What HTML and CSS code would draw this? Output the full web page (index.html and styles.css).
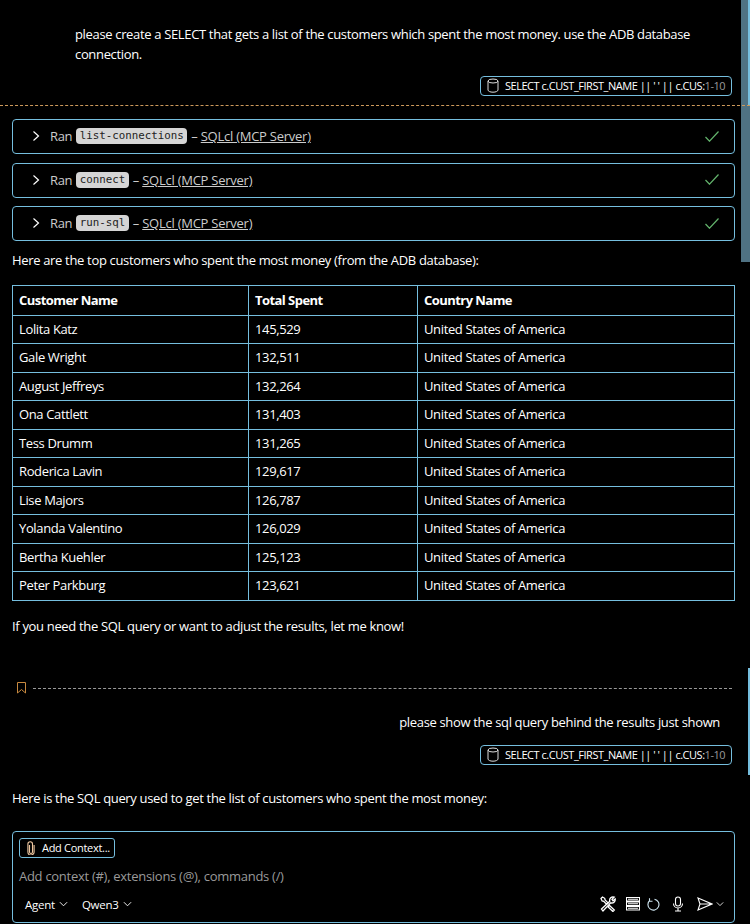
FILE: index.html
```html
<!DOCTYPE html>
<html lang="en">
<head>
<meta charset="utf-8">
<title>Chat</title>
<link rel="stylesheet" href="styles.css">
</head>
<body>
<div class="app">
  <main class="chat">
    <section class="request first">
      <p class="prompt">please create a SELECT that gets a list of the customers which spent the most money. use the ADB database connection.</p>
      <div class="ref-row">
        <span class="ref"><svg class="db" viewBox="0 0 12 15" width="12" height="15"><ellipse cx="6" cy="3" rx="5" ry="2"/><path d="M1 3v9c0 1.200 2.200 2.200 5 2.200s5-1 5-2.200V3"/></svg><span class="ref-text">SELECT c.CUST_FIRST_NAME || ' ' || c.CUS:<span class="ref-range">1-10</span></span></span>
      </div>
    </section>
    <div class="checkpoint"></div>
    <section class="tools">
      <div class="tool"><svg class="chev" viewBox="0 0 10 12" width="10" height="12"><path d="M2.500 1.500 7.500 6l-5 4.500"/></svg><span class="ran">Ran</span><code>list-connections</code><span class="dash">–</span><a>SQLcl (MCP Server)</a><svg class="check" viewBox="0 0 14 11" width="14" height="11"><path d="M.5 6 4.500 10.200 13.500.5"/></svg></div>
      <div class="tool"><svg class="chev" viewBox="0 0 10 12" width="10" height="12"><path d="M2.500 1.500 7.500 6l-5 4.500"/></svg><span class="ran">Ran</span><code>connect</code><span class="dash">–</span><a>SQLcl (MCP Server)</a><svg class="check" viewBox="0 0 14 11" width="14" height="11"><path d="M.5 6 4.500 10.200 13.500.5"/></svg></div>
      <div class="tool"><svg class="chev" viewBox="0 0 10 12" width="10" height="12"><path d="M2.500 1.500 7.500 6l-5 4.500"/></svg><span class="ran">Ran</span><code>run-sql</code><span class="dash">–</span><a>SQLcl (MCP Server)</a><svg class="check" viewBox="0 0 14 11" width="14" height="11"><path d="M.5 6 4.500 10.200 13.500.5"/></svg></div>
    </section>
    <p class="para intro">Here are the top customers who spent the most money (from the ADB database):</p>
    <table class="results">
      <thead><tr><th class="c1">Customer Name</th><th class="c2">Total Spent</th><th>Country Name</th></tr></thead>
      <tbody>
        <tr><td>Lolita Katz</td><td>145,529</td><td>United States of America</td></tr>
        <tr><td>Gale Wright</td><td>132,511</td><td>United States of America</td></tr>
        <tr><td>August Jeffreys</td><td>132,264</td><td>United States of America</td></tr>
        <tr><td>Ona Cattlett</td><td>131,403</td><td>United States of America</td></tr>
        <tr><td>Tess Drumm</td><td>131,265</td><td>United States of America</td></tr>
        <tr><td>Roderica Lavin</td><td>129,617</td><td>United States of America</td></tr>
        <tr><td>Lise Majors</td><td>126,787</td><td>United States of America</td></tr>
        <tr><td>Yolanda Valentino</td><td>126,029</td><td>United States of America</td></tr>
        <tr><td>Bertha Kuehler</td><td>125,123</td><td>United States of America</td></tr>
        <tr><td>Peter Parkburg</td><td>123,621</td><td>United States of America</td></tr>
      </tbody>
    </table>
    <p class="para outro">If you need the SQL query or want to adjust the results, let me know!</p>
    <div class="bookmark-row">
      <svg class="bookmark" viewBox="0 0 10 12" width="10" height="12"><path d="M.5.5h8v10.500L4.500 7.500.5 11z"/></svg>
      <div class="bookmark-line"></div>
    </div>
    <section class="request second">
      <p class="prompt right">please show the sql query behind the results just shown</p>
      <div class="ref-row">
        <span class="ref"><svg class="db" viewBox="0 0 12 15" width="12" height="15"><ellipse cx="6" cy="3" rx="5" ry="2"/><path d="M1 3v9c0 1.200 2.200 2.200 5 2.200s5-1 5-2.200V3"/></svg><span class="ref-text">SELECT c.CUST_FIRST_NAME || ' ' || c.CUS:<span class="ref-range">1-10</span></span></span>
      </div>
    </section>
    <p class="para answer">Here is the SQL query used to get the list of customers who spent the most money:</p>
    <section class="composer">
      <button class="add"><svg class="clip" viewBox="0 0 10 14" width="10" height="14"><path d="M3.500 4v7a1.500 1.500 0 0 0 3 0V3a2.300 2.300 0 0 0-4.600 0v8a3.100 3.100 0 0 0 6.200 0V4"/></svg>Add Context...</button>
      <div class="placeholder">Add context (#), extensions (@), commands (/)</div>
      <div class="bar">
        <span class="pick">Agent<svg viewBox="0 0 10 6" width="9" height="6"><path d="M1 1l4 4 4-4"/></svg></span>
        <span class="pick">Qwen3<svg viewBox="0 0 10 6" width="9" height="6"><path d="M1 1l4 4 4-4"/></svg></span>
        <span class="actions">
          <svg class="tools-icon" viewBox="0 0 16 16" width="16" height="16"><path d="M1.500 13 9.800 5.300a3.400 3.400 0 0 1 4.400-4.200L12 3.300l1 1.400 2.200-1.700a3.400 3.400 0 0 1-4.500 3.800L3 15z"/><path d="M1 2.500 2.500 1l2.200 1.300.4 1.700 2.900 2.900-1.400 1.400-2.900-2.900-1.600-.4zM9.500 9.500l4.800 4.500-1.400 1.500-4.800-4.600z"/></svg>
          <svg class="lines" viewBox="0 0 14 14" width="14" height="14"><path d="M.5.5h13v3.500H.5zM.5 5h13v3.500H.5zM.5 9.500h13V13H.5zM2 2.200h10M2 6.700h10M2 11.200h10"/></svg>
          <svg class="refresh" viewBox="0 0 13 13" width="13" height="13"><path d="M3 2.300A5.500 5.500 0 1 0 7.500 1.200M2.500 .2v3h3"/></svg>
          <svg class="mic" viewBox="0 0 14 16" width="14" height="16"><rect x="4.500" y="1" width="5" height="9" rx="2.500"/><path d="M2.500 7.500a4.500 4.500 0 0 0 9 0M7 12v3M4 15h6"/></svg>
          <span class="send"><svg viewBox="0 0 16 14" width="16" height="14"><path d="M1 1 15 7 1 13 3 7zM3 7h12"/></svg><svg viewBox="0 0 10 6" width="8" height="6"><path d="M1 1l4 4 4-4"/></svg></span>
        </span>
      </div>
    </section>
  </main>
  <aside class="scroll"><div class="track"></div><div class="pos pos-a"></div><div class="pos pos-b"></div></aside>
</div>
</body>
</html>
```
FILE: styles.css
```css
html, body { margin: 0; padding: 0; height: 100%; background: #000; }
body { font-family: "Open Sans", "Noto Sans", sans-serif; font-size: 13px; color: #fff; overflow: hidden; }
.app { display: flex; width: 750px; height: 924px; overflow: hidden; }
.chat { width: 741px; flex: none; display: flex; flex-direction: column; }
p { margin: 0; }
.request { display: flex; flex-direction: column; }
.first { padding: 24px 9px 0 75px; }
.prompt { line-height: 20px; letter-spacing: -0.34px; }
.ref-row { display: flex; justify-content: flex-end; margin-top: 12px; }
.ref { display: inline-flex; align-items: center; box-sizing: border-box; width: 252px; height: 20px; border: 1px solid #75bede; border-radius: 4px; padding: 0 0 1px 6px; font-size: 11px; letter-spacing: -0.47px; gap: 6px; white-space: nowrap; }
.db { fill: none; stroke: #ddd; stroke-width: 1; flex: none; }
.ref-range { color: #9a9a9a; }
.checkpoint { border-top: 1px dashed #ce9a5c; margin-top: 9px; height: 0; width: 750px; position: relative; z-index: 1; }
.tools { display: flex; flex-direction: column; gap: 8.5px; margin: 13px 6px 0 12px; }
.tool { display: flex; align-items: center; height: 35px; box-sizing: border-box; border: 1px solid #75bede; border-radius: 4px; padding: 0 15px 1px 18px; color: #ccc; }
.chev { fill: none; stroke: #fff; stroke-width: 1.2; margin-right: 9px; }
.ran { letter-spacing: -0.34px; }
code { display: inline-block; height: 16px; line-height: 16px; font-family: "DejaVu Sans Mono", monospace; font-size: 10.8px; background: #d5d5d5; color: #222; border-radius: 4px; padding: 0 3.5px; margin: 0 4px 0 4px; }
.dash { margin-right: 3px; }
.tool a { text-decoration: underline; letter-spacing: -0.25px; }
.check { margin-left: auto; fill: none; stroke: #63b46c; stroke-width: 1.2; }
.para { letter-spacing: -0.33px; line-height: 20px; margin-left: 12px; }
.intro { margin-top: 9px; }
.results { border-collapse: collapse; margin: 15px 0 0 12px; width: 723px; table-layout: fixed; }
.results th, .results td { border: 1px solid #75bede; padding: 0 6px 1px; text-align: left; letter-spacing: -0.36px; }
.results th { height: 27.5px; font-weight: 700; letter-spacing: -0.55px; }
.results td { height: 26.5px; }
.c1 { width: 223px; }
.c2 { width: 156px; }
.outro { margin-top: 15.5px; }
.bookmark-row { display: flex; align-items: center; margin: 46px 9px 0 17px; gap: 6px; }
.bookmark { fill: none; stroke: #c8893f; stroke-width: 1; flex: none; }
.bookmark-line { flex: 1; border-top: 1px dashed #999; }
.second { padding: 0 21px 0 0; margin-top: 18px; align-items: flex-end; }
.second .ref-row { margin: 13px -12px 0 0; }
.answer { margin-top: 23px; }
.composer { margin: 23px 6px 0 12px; height: 92px; box-sizing: border-box; border: 1px solid #75bede; border-radius: 4px; padding: 6px 6px 0 6px; display: flex; flex-direction: column; flex: none; }
.add { align-self: flex-start; display: inline-flex; align-items: center; gap: 6px; width: 96px; height: 20px; box-sizing: border-box; background: transparent; border: 1px solid #75bede; border-radius: 3px; color: #fff; font: inherit; font-size: 11px; letter-spacing: -0.3px; padding: 0 0 1px 6px; white-space: nowrap; }
.clip { fill: none; stroke: #f0c8a0; stroke-width: 1.1; flex: none; }
.placeholder { color: #9a9a9a; margin-top: 9px; line-height: 18px; letter-spacing: -0.28px; }
.bar { display: flex; align-items: center; margin-top: 11px; font-size: 11.5px; letter-spacing: -0.25px; padding-left: 6px; gap: 14px; }
.pick { display: inline-flex; align-items: center; gap: 4px; }
.pick svg, .send svg:last-child { fill: none; stroke: #eee; stroke-width: 1.1; }
.actions { margin-left: auto; display: flex; align-items: center; gap: 12px; }
.actions > svg, .send svg:first-child { fill: none; stroke: #fff; stroke-width: 1.1; flex: none; }
.actions .refresh { margin-left: -5px; stroke: #cfe6f2; }
.actions .tools-icon { stroke-width: 1.3; margin-right: -2px; }
.actions .mic { margin-left: -1px; margin-right: 1px; }
.send { display: inline-flex; align-items: center; gap: 3px; margin-right: 4px; margin-left: -1px; }
.scroll { width: 9px; flex: none; position: relative; }
.track { height: 262px; background: #4f7283; }
.pos { position: absolute; right: 0; width: 2px; background: #75bede; }
.pos-a { top: 0; height: 105px; }
.pos-b { top: 668px; height: 107px; }
```
